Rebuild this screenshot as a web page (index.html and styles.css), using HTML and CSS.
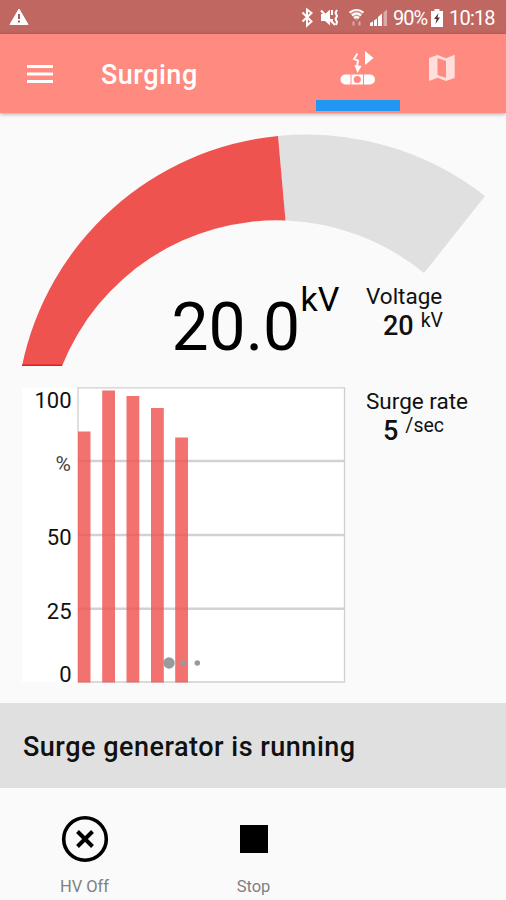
FILE: index.html
```html
<!DOCTYPE html>
<html lang="en">
<head>
    <meta charset="UTF-8">
    <meta name="viewport" content="width=device-width, initial-scale=1.0">
    <title>Surging</title>
    <link rel="stylesheet" href="styles.css">
</head>
<body>
    <div class="status-bar">
        <svg class="warning-icon" width="20" height="18" viewBox="0 0 20 18">
            <path d="M10 1 19 16.5H1z" fill="#fff" stroke="#fff" stroke-linejoin="round"/>
            <path d="M10 6v5M10 12.5v2" stroke="#a95a55" stroke-width="2"/>
        </svg>
        <svg class="status-icons" width="90" height="34" viewBox="300 0 90 34">
            <path d="M302.500 12.500 311.500 21.500 307 25.500V9.500L311.500 13 302.500 21.500" fill="none" stroke="#fff" stroke-width="2"/>
            <path d="M321 14h4l5-4.500v16L325 21h-4z" fill="#fff"/>
            <path d="M321 10.500 335 25" stroke="#fff" stroke-width="2"/>
            <path d="M332 10v5M332 19v3M337 10l-1.500 3 1.500 3-1.500 3 1.500 3-1 3" fill="none" stroke="#fff" stroke-width="2"/>
            <g fill="none" stroke="#fff" stroke-width="1.700">
                <path d="M349.500 12.500q7-5.500 14 0M352 15.500q4.500-4 9 0M354 18q2.500-2 5 0"/>
            </g>
            <path d="M349 12q7.500-6 15 0l-7.500 9z" fill="#fff" opacity=".35"/>
            <path d="M353.500 21.500v4M359.500 21.500v4" fill="none" stroke="#fff" stroke-width="2" opacity=".45"/>
            <path d="M370 26v-3l3-1.500V26zM374 26v-5.500l3-2V26zM378 26v-9l4-3.500V26z" fill="#fff"/>
            <path d="M383.500 26V12.500l3.500-3V26z" fill="#fff" opacity=".45"/>
        </svg>
        <span class="battery-text">90%</span>
        <svg class="battery-icon" width="12" height="18" viewBox="0 0 12 18">
            <path d="M3.500 0h5v2H12v16H0V2h3.500z" fill="#fff"/>
            <path d="M7.500 4 3 10h2.500L4.500 15 9 8.500H6.500z" fill="#553330"/>
        </svg>
        <span class="clock">10:18</span>
    </div>

    <header class="app-bar">
        <svg class="menu-icon" width="26" height="18" viewBox="0 0 26 18">
            <path d="M0 1.500h26M0 9h26M0 16.500h26" stroke="#fff" stroke-width="2.800"/>
        </svg>
        <h1>Surging</h1>
        <nav class="tabs">
            <div class="tab active">
                <svg width="36" height="36" viewBox="340 50 36 36">
                    <path d="M365 51v14l8.500-7z" fill="#fff"/>
                    <path d="M357.500 53.500 354 59l4 1.500-1 6" fill="none" stroke="#fff" stroke-width="1.800"/>
                    <path d="M354.500 65 361.500 66 357.500 73z" fill="#fff"/>
                    <path d="M350.500 74.500v10H345.500a5 5 0 0 1 0-10zM364 74.500h6a5 5 0 0 1 0 10h-6z" fill="#fff"/>
                    <path d="M351.500 74.500h11.500v10H351.500z" fill="#fff"/>
                    <circle cx="357.300" cy="79.500" r="3.600" fill="#ff8a80"/>
                </svg>
            </div>
            <div class="tab map">
                <svg width="28" height="28" viewBox="0 0 28 28">
                    <path fill="#fff" fill-rule="evenodd" d="M26.500 1 26 1.100 18 4.200 9.500 1 1.600 3.700Q1 4 1 4.500V26q0 1 1 .8l7.500-3L18 27l7.900-2.700q.8-.3.800-1V1.700q0-.6-.2-.7zM18 24l-8.500-3V4L18 7z"/>
                </svg>
            </div>
        </nav>
    </header>

    <main>
        <section class="gauge">
            <svg width="506" height="260" viewBox="0 113 506 260">
                <path d="M278 136A290 290 0 0 1 485 196L424 273A231.600 231.600 0 0 0 285.500 220.500z" fill="#e0e0e0"/>
                <path d="M22 366A290 290 0 0 1 278 136L285.500 220.500A231.600 231.600 0 0 0 62 366z" fill="#ef5350"/>
                <path d="M22 365.300H62" stroke="#ea1c1c" stroke-width="1.600"/>
                <text class="gauge-value" x="171.500" y="350">20.0</text>
                <text class="gauge-unit" x="300.500" y="310.500">kV</text>
            </svg>
            <div class="reading voltage">
                <div class="reading-name">Voltage</div>
                <div class="reading-value"><b>20</b><sup>kV</sup></div>
            </div>
        </section>

        <section class="rate">
            <svg class="chart" width="324" height="300" viewBox="22 387 324 300">
                <path d="M22 388h323v294H22z" fill="#fff"/>
                <path d="M78 461H344M78 535H344M78 608.700H344" stroke="#d2d2d2" stroke-width="2.600"/>
                <path d="M78 387.800H344.500V682H78z" fill="none" stroke="#cfcfcf" stroke-width="1.300"/>
                <g fill="#ef5350" fill-opacity=".82">
                    <rect x="78" y="431.500" width="12.500" height="251"/>
                    <rect x="102.200" y="390.500" width="12.800" height="292"/>
                    <rect x="126.500" y="396" width="12.800" height="286.500"/>
                    <rect x="151" y="408" width="12.800" height="274.500"/>
                    <rect x="175.200" y="437.500" width="12.800" height="245"/>
                </g>
                <g class="axis">
                    <text x="71.500" y="408">100</text>
                    <text class="percent" x="71" y="471">%</text>
                    <text x="71.500" y="545">50</text>
                    <text x="71.500" y="619">25</text>
                    <text x="71.500" y="682">0</text>
                </g>
                <g fill="#9a9a9a">
                    <circle cx="169" cy="663" r="5.700"/>
                    <circle cx="183" cy="663" r="2.800"/>
                    <circle cx="197.300" cy="663" r="2.800"/>
                </g>
            </svg>
            <div class="reading">
                <div class="reading-name">Surge rate</div>
                <div class="reading-value"><b>5</b><sup>/sec</sup></div>
            </div>
        </section>
    </main>

    <div class="message">Surge generator is running</div>

    <footer class="actions">
        <div class="action">
            <svg width="48" height="48" viewBox="0 0 48 48">
                <circle cx="24" cy="24" r="21.300" fill="none" stroke="#000" stroke-width="3.600"/>
                <path d="M16.500 16.500l15 15M31.500 16.500l-15 15" stroke="#000" stroke-width="4"/>
            </svg>
            <span>HV Off</span>
        </div>
        <div class="action">
            <svg width="48" height="48" viewBox="0 0 48 48">
                <path d="M10 10h28v28H10z"/>
            </svg>
            <span>Stop</span>
        </div>
    </footer>
</body>
</html>
```
FILE: styles.css
```css
* {
    box-sizing: border-box;
}
body {
    margin: 0;
    width: 506px;
    height: 900px;
    overflow: hidden;
    background: #fafafa;
    color: #111;
    font-family: Roboto, sans-serif;
}
svg {
    display: block;
    flex: none;
}
.status-bar {
    display: flex;
    align-items: center;
    height: 34px;
    padding: 0 11px 0 9px;
    background: #bf6760;
    color: #fff;
    font-size: 20px;
}
.status-icons {
    margin-left: auto;
}
.battery-text {
    width: 35px;
    margin-left: 3px;
    letter-spacing: -1px;
    padding-top: 2px;
}
.battery-icon {
    margin: 1px 6px 0 3px;
}
.clock {
    width: 46px;
    padding-top: 2px;
    letter-spacing: -0.8px;
    white-space: nowrap;
}
.app-bar {
    position: relative;
    display: flex;
    align-items: center;
    height: 79px;
    padding-left: 27px;
    background: #ff8a80;
    color: #fff;
    box-shadow: 0 1px 4px rgba(0, 0, 0, 0.35);
}
h1 {
    margin: 3px 0 0 48px;
    width: 215px;
    font-size: 27px;
    font-weight: 500;
    letter-spacing: 0.5px;
}
.tabs {
    display: flex;
    height: 79px;
}
.tab {
    width: 84px;
    height: 77px;
    padding-top: 16px;
    display: flex;
    justify-content: center;
}
.tab.active {
    border-bottom: 11px solid #2196f3;
}
.tab.map {
    padding-top: 20px;
    opacity: 0.72;
}
.gauge {
    position: relative;
    height: 274px;
}
.gauge-value {
    font-size: 66px;
    fill: #000;
}
.gauge-unit {
    font-size: 34px;
    fill: #000;
}
.reading {
    width: 130px;
}
.reading-name {
    font-size: 22.5px;
    line-height: 28px;
}
.reading-value {
    display: flex;
    padding-left: 17px;
    line-height: 31px;
}
.reading-value b {
    font-size: 27px;
    font-weight: 500;
    padding-top: 1px;
}
.reading-value sup {
    margin-left: 7px;
    font-size: 19.5px;
    line-height: 21px;
}
/* sits in the open corner under the arc */
.voltage {
    position: absolute;
    left: 366px;
    top: 169px;
}
.rate {
    display: flex;
    gap: 20px;
    height: 316px;
    padding-left: 22px;
}
.axis text {
    font-size: 22px;
    text-anchor: end;
    fill: #111;
}
.axis .percent {
    font-size: 21px;
    fill: #444;
}
.message {
    height: 85px;
    padding-left: 23px;
    background: #e0e0e0;
    font-size: 27px;
    font-weight: 500;
    letter-spacing: 0.5px;
    line-height: 89px;
}
.actions {
    display: flex;
    height: 112px;
}
.action {
    display: flex;
    flex-direction: column;
    align-items: center;
    width: 169px;
    padding-top: 27px;
    color: #808080;
    font-size: 16.5px;
    line-height: 20px;
}
.action span {
    margin-top: 14px;
}
```
